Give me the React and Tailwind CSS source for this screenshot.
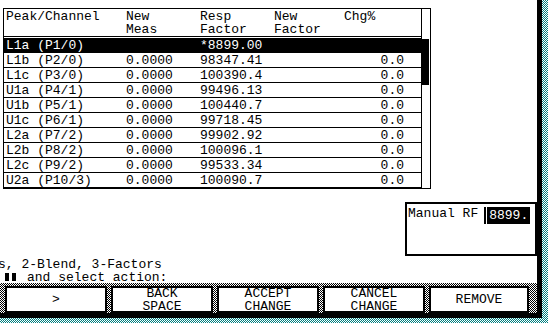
export default function App() {
  const rows = [
    ["L1a (P1/0)", "", "*8899.00", "", ""],
    ["L1b (P2/0)", "0.0000", "98347.41", "", "0.0"],
    ["L1c (P3/0)", "0.0000", "100390.4", "", "0.0"],
    ["U1a (P4/1)", "0.0000", "99496.13", "", "0.0"],
    ["U1b (P5/1)", "0.0000", "100440.7", "", "0.0"],
    ["U1c (P6/1)", "0.0000", "99718.45", "", "0.0"],
    ["L2a (P7/2)", "0.0000", "99902.92", "", "0.0"],
    ["L2b (P8/2)", "0.0000", "100096.1", "", "0.0"],
    ["L2c (P9/2)", "0.0000", "99533.34", "", "0.0"],
    ["U2a (P10/3)", "0.0000", "100090.7", "", "0.0"],
  ];
  const buttons = [[">"], ["BACK", "SPACE"], ["ACCEPT", "CHANGE"], ["CANCEL", "CHANGE"], ["REMOVE"]];

  return (
    <div className="w-[548px] h-[323px] overflow-hidden bg-[repeating-conic-gradient(#008080_0%_25%,#ffffff_0%_50%)] bg-[length:2px_2px] font-['Liberation_Mono',monospace] text-[13px] text-black">
      <div className="w-[542px] h-[318px] bg-white border-r-[5px] border-b-[5px] border-black flex flex-col">
        {/* table */}
        <div className="ml-[3px] mt-[8px] w-[428px] flex border border-black">
          <div className="w-[418px] border-r border-black">
            <div className="h-[28px] border-b border-black flex pl-[2px] pt-[1px] leading-[13px] whitespace-pre">
              <div className="w-[120px]">Peak/Channel</div>
              <div className="w-[74px]">New{"\n"}Meas</div>
              <div className="w-[74px]">Resp{"\n"}Factor</div>
              <div className="w-[70px]">New{"\n"}Factor</div>
              <div className="w-[60px]">Chg%</div>
            </div>
            <div className="h-[1px]"></div>
            {rows.map((r, i) => (
              <div
                key={i}
                className={
                  i === 0
                    ? "h-[15px] border-b border-black bg-black text-white flex pl-[2px] pt-[1px] leading-[14px] whitespace-pre"
                    : "h-[15px] border-b border-black flex pl-[2px] pt-[1px] leading-[14px] whitespace-pre"
                }
              >
                <div className="w-[120px]">{r[0]}</div>
                <div className="w-[74px]">{r[1]}</div>
                <div className="w-[74px]">{r[2]}</div>
                <div className="w-[70px]">{r[3]}</div>
                <div className="w-[60px] text-right">{r[4]}</div>
              </div>
            ))}
          </div>
          <div className="w-[8px]">
            <div className="mt-[30px] w-[7px] h-[46px] bg-black"></div>
          </div>
        </div>

        {/* Manual RF box */}
        <div className="mt-[13px] ml-auto w-[132px] h-[55px] border-2 border-black pt-[3px] pl-[1px] flex items-start">
          <span className="leading-[13px] whitespace-pre">Manual RF</span>
          <span className="ml-[6px] w-[2px] h-[17px] bg-black"></span>
          <span className="ml-[1px] h-[17px] bg-black text-white px-[2px] leading-[18px]">8899.</span>
        </div>

        {/* prompt text */}
        <div className="h-[27px] pt-[2px] leading-[13px] whitespace-pre">
          <div className="-ml-[2px]">s, 2-Blend, 3-Factors</div>
          <div>
            <span className="inline-block ml-[5px] w-[4px] h-[8px] bg-black"></span>
            <span className="inline-block ml-[3px] w-[4px] h-[8px] bg-black"></span>
            <span className="ml-[11px]">and select action:</span>
          </div>
        </div>

        {/* button bar */}
        <div className="h-[30px] pt-[3px] pl-[5px] flex gap-[4px] bg-[repeating-conic-gradient(#000000_0%_25%,#ffffff_0%_50%)] bg-[length:2px_2px]">
          {buttons.map((b, i) => (
            <div
              key={i}
              className={
                (i === 4 ? "w-[100px]" : "w-[102px]") +
                " h-[27px] border-2 border-black bg-white flex flex-col items-center justify-center leading-[13px]"
              }
            >
              {b.map((t, j) => (
                <div key={j}>{t}</div>
              ))}
            </div>
          ))}
        </div>
      </div>
    </div>
  );
}
